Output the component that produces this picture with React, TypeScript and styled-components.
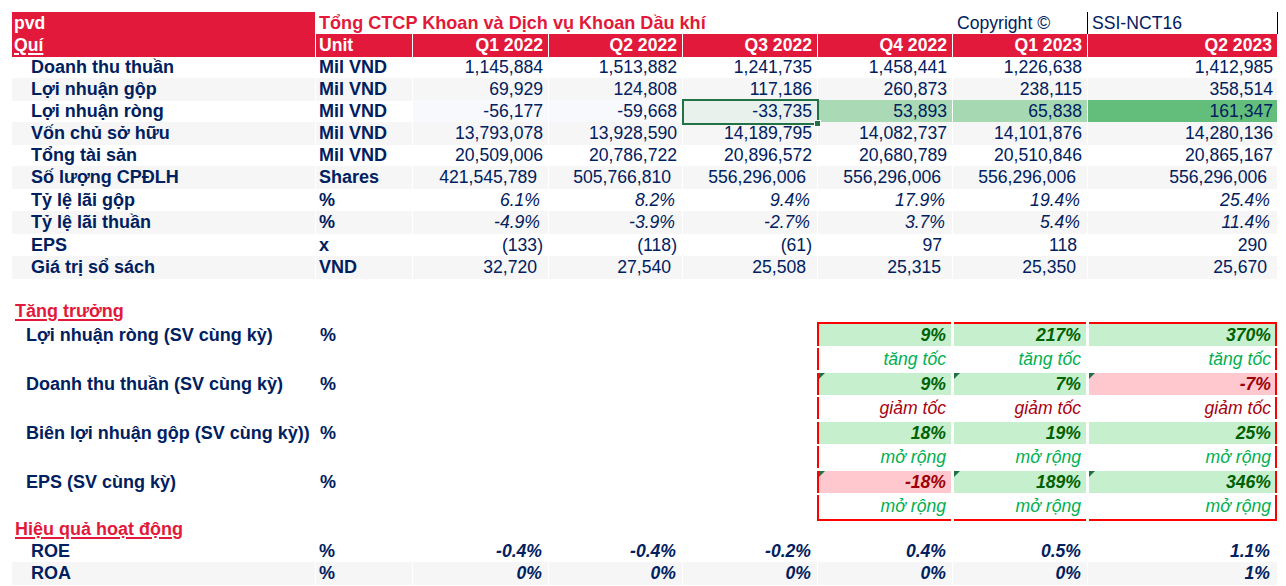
import React from 'react';
import styled, { createGlobalStyle, css } from 'styled-components';

const GlobalStyle = createGlobalStyle`
  html, body {
    margin: 0;
    padding: 0;
    background: #ffffff;
  }
  body {
    font-family: 'Liberation Sans', Arial, sans-serif;
    font-size: 17.6px;
    color: #002060;
    overflow: hidden;
  }
`;

const COLS = '304px 97px 136px 134px 135px 135px 135px 190px';
const RED = '#e2193a';
const NAVY = '#002060';
const SHADE = '#f6f6f6';

const Sheet = styled.div`
  box-sizing: border-box;
  height: 586px;
  padding: 12px 0 0 12px;
  overflow: hidden;
`;

const Row = styled.div<{ $h?: number }>`
  display: grid;
  grid-template-columns: ${COLS};
  height: ${(p) => p.$h ?? 22}px;
  line-height: ${(p) => (p.$h ?? 22) + 1}px;
`;

type CellProps = {
  $bg?: string;
  $right?: boolean;
  $pad?: number;
  $bold?: boolean;
  $italic?: boolean;
  $color?: string;
};

const Cell = styled.div<CellProps>`
  box-sizing: border-box;
  position: relative;
  border-right: 1px solid #ffffff;
  border-bottom: 1px solid #ffffff;
  background: ${(p) => p.$bg ?? 'transparent'};
  color: ${(p) => p.$color ?? NAVY};
  font-weight: ${(p) => (p.$bold ? 700 : 400)};
  font-size: ${(p) => (p.$bold && !p.$italic ? 18 : 17.6)}px;
  font-style: ${(p) => (p.$italic ? 'italic' : 'normal')};
  text-align: ${(p) => (p.$right ? 'right' : 'left')};
  white-space: nowrap;
  ${(p) =>
    p.$right
      ? css`
          padding-right: ${p.$pad ?? 5}px;
        `
      : css`
          padding-left: ${p.$pad ?? 3}px;
        `}
`;

const TitleText = styled(Cell)`
  grid-column: 2 / 7;
  overflow: visible;
  font-size: 18.1px;
`;

const CodeCell = styled(Cell)`
  border-left: 1px solid #000000;
  border-right: 1px solid #000000;
  margin-left: -1px;
`;

const HeadCell = styled(Cell)`
  background: ${RED};
  color: #ffffff;
  font-weight: 700;
`;

const Underlined = styled.span`
  text-decoration: underline;
  text-decoration-thickness: 1.5px;
  text-underline-offset: 2px;
`;

const SelectedCell = styled(Cell)`
  background: #e9f1ec;
  outline: 2px solid #217346;
  outline-offset: -1px;
  z-index: 1;

  &::after {
    content: '';
    position: absolute;
    right: -4px;
    bottom: -4px;
    width: 5px;
    height: 5px;
    background: #217346;
    border: 1px solid #ffffff;
  }
`;

const SectionTitle = styled.div`
  grid-column: 1 / 4;
  padding-left: 3px;
  color: ${RED};
  font-weight: 700;
  font-size: 18px;
  white-space: nowrap;
  text-decoration: underline;
  text-decoration-thickness: 2px;
  text-underline-offset: 2px;
`;

const GrowthLabel = styled.div<{ $offset?: number }>`
  padding: ${(p) => p.$offset ?? 0}px 0 0 14px;
  line-height: 23.5px;
  font-weight: 700;
  font-size: 18px;
  white-space: nowrap;
`;

const GrowthUnit = styled.div<{ $offset?: number }>`
  padding: ${(p) => p.$offset ?? 0}px 0 0 4px;
  line-height: 23.5px;
  font-weight: 700;
  font-size: 18px;
  grid-column: 2 / 6;
`;

const GrowthGap = styled.div`
  grid-column: 1 / 6;
`;

type Tone = 'good' | 'bad' | 'up' | 'down';
type Slot = 'first' | 'mid' | 'last';

const toneStyle: Record<Tone, { bg: string; color: string; bold: boolean }> = {
  good: { bg: '#c6efce', color: '#006100', bold: true },
  bad: { bg: '#ffc7ce', color: '#9c0006', bold: true },
  up: { bg: '#ffffff', color: '#00b050', bold: false },
  down: { bg: '#ffffff', color: '#a8000f', bold: false },
};

const slotMargin: Record<Slot, string> = {
  first: '0 2px 0 -1px',
  mid: '0 2px 0 1px',
  last: '0 1px 0 1px',
};

const GrowthCell = styled.div<{
  $tone: Tone;
  $slot: Slot;
  $top?: boolean;
  $bottom?: boolean;
  $flag?: boolean;
}>`
  position: relative;
  box-sizing: border-box;
  height: ${(p) => (p.$bottom ? '100%' : 'calc(100% - 2.5px)')};
  margin: ${(p) => slotMargin[p.$slot]};
  padding-right: ${(p) => (p.$slot === 'last' ? 4 : 5)}px;
  background: ${(p) => toneStyle[p.$tone].bg};
  color: ${(p) => toneStyle[p.$tone].color};
  font-weight: ${(p) => (toneStyle[p.$tone].bold ? 700 : 400)};
  font-style: italic;
  text-align: right;
  line-height: 23.5px;
  white-space: nowrap;
  border-left: ${(p) => (p.$slot === 'first' ? '2px solid #ff0000' : 'none')};
  border-right: ${(p) => (p.$slot === 'last' ? '2px solid #ff0000' : 'none')};
  border-top: ${(p) => (p.$top ? '2px solid #ff0000' : 'none')};
  border-bottom: ${(p) => (p.$bottom ? '2px solid #ff0000' : 'none')};

  ${(p) =>
    p.$flag &&
    css`
      &::before {
        content: '';
        position: absolute;
        top: 0;
        left: 0;
        border-top: 6px solid #1e7145;
        border-right: 6px solid transparent;
      }
    `}
`;

type DataRow = {
  label: string;
  unit: string;
  values: string[];
  shade?: boolean;
  italic?: boolean;
  pad?: number[];
  fills?: (string | undefined)[];
  selected?: number;
  h?: number;
};

const quarters = ['Q1 2022', 'Q2 2022', 'Q3 2022', 'Q4 2022', 'Q1 2023', 'Q2 2023'];

const wide = [11, 11, 11, 11, 11, 10];
const pct = [8, 7, 7, 7, 7, 7];

const dataRows: DataRow[] = [
  {
    label: 'Doanh thu thuần',
    unit: 'Mil VND',
    values: ['1,145,884', '1,513,882', '1,241,735', '1,458,441', '1,226,638', '1,412,985'],
  },
  {
    label: 'Lợi nhuận gộp',
    unit: 'Mil VND',
    values: ['69,929', '124,808', '117,186', '260,873', '238,115', '358,514'],
    shade: true,
  },
  {
    label: 'Lợi nhuận ròng',
    unit: 'Mil VND',
    values: ['-56,177', '-59,668', '-33,735', '53,893', '65,838', '161,347'],
    fills: ['#f8f9fc', '#f8f9fc', undefined, '#a9dab5', '#a6d9b2', '#63be7b'],
    selected: 2,
  },
  {
    label: 'Vốn chủ sở hữu',
    unit: 'Mil VND',
    values: ['13,793,078', '13,928,590', '14,189,795', '14,082,737', '14,101,876', '14,280,136'],
    shade: true,
  },
  {
    label: 'Tổng tài sản',
    unit: 'Mil VND',
    values: ['20,509,006', '20,786,722', '20,896,572', '20,680,789', '20,510,846', '20,865,167'],
  },
  {
    label: 'Số lượng CPĐLH',
    unit: 'Shares',
    values: ['421,545,789', '505,766,810', '556,296,006', '556,296,006', '556,296,006', '556,296,006'],
    shade: true,
    pad: wide,
  },
  {
    label: 'Tỷ lệ lãi gộp',
    unit: '%',
    values: ['6.1%', '8.2%', '9.4%', '17.9%', '19.4%', '25.4%'],
    italic: true,
    pad: pct,
    h: 23,
  },
  {
    label: 'Tỷ lệ lãi thuần',
    unit: '%',
    values: ['-4.9%', '-3.9%', '-2.7%', '3.7%', '5.4%', '11.4%'],
    italic: true,
    shade: true,
    pad: pct,
  },
  {
    label: 'EPS',
    unit: 'x',
    values: ['(133)', '(118)', '(61)', '97', '118', '290'],
    pad: [5, 5, 5, 10, 10, 10],
    h: 23,
  },
  {
    label: 'Giá trị sổ sách',
    unit: 'VND',
    values: ['32,720', '27,540', '25,508', '25,315', '25,350', '25,670'],
    shade: true,
    pad: wide,
  },
];

type GrowthItem = {
  label: string;
  values: { text: string; tone: Tone; flag?: boolean }[];
  note: string;
  noteTone: Tone;
};

const growth: GrowthItem[] = [
  {
    label: 'Lợi nhuận ròng (SV cùng kỳ)',
    values: [
      { text: '9%', tone: 'good' },
      { text: '217%', tone: 'good' },
      { text: '370%', tone: 'good' },
    ],
    note: 'tăng tốc',
    noteTone: 'up',
  },
  {
    label: 'Doanh thu thuần (SV cùng kỳ)',
    values: [
      { text: '9%', tone: 'good', flag: true },
      { text: '7%', tone: 'good', flag: true },
      { text: '-7%', tone: 'bad', flag: true },
    ],
    note: 'giảm tốc',
    noteTone: 'down',
  },
  {
    label: 'Biên lợi nhuận gộp (SV cùng kỳ))',
    values: [
      { text: '18%', tone: 'good' },
      { text: '19%', tone: 'good' },
      { text: '25%', tone: 'good' },
    ],
    note: 'mở rộng',
    noteTone: 'up',
  },
  {
    label: 'EPS (SV cùng kỳ)',
    values: [
      { text: '-18%', tone: 'bad', flag: true },
      { text: '189%', tone: 'good', flag: true },
      { text: '346%', tone: 'good', flag: true },
    ],
    note: 'mở rộng',
    noteTone: 'up',
  },
];

const efficiency = [
  { label: 'ROE', values: ['-0.4%', '-0.4%', '-0.2%', '0.4%', '0.5%', '1.1%'] },
  { label: 'ROA', values: ['0%', '0%', '0%', '0%', '0%', '1%'], shade: true },
];

const slots: Slot[] = ['first', 'mid', 'last'];

const App = (): JSX.Element => {
  return (
    <Sheet>
      <GlobalStyle />

      <Row>
        <HeadCell $pad={2}>pvd</HeadCell>
        <TitleText $bold $color={RED} $pad={3}>
          Tổng CTCP Khoan và Dịch vụ Khoan Dầu khí
        </TitleText>
        <Cell $pad={4}>Copyright ©</Cell>
        <CodeCell $pad={4}>SSI-NCT16</CodeCell>
      </Row>

      <Row>
        <HeadCell $pad={2}>
          <Underlined>Quí</Underlined>
        </HeadCell>
        <HeadCell $pad={3}>Unit</HeadCell>
        {quarters.map((q) => (
          <HeadCell key={q} $right>
            {q}
          </HeadCell>
        ))}
      </Row>

      {dataRows.map((row) => {
        const bg = row.shade ? SHADE : undefined;
        return (
          <Row key={row.label} $h={row.h}>
            <Cell $bg={bg} $bold $pad={19}>
              {row.label}
            </Cell>
            <Cell $bg={bg} $bold $pad={3}>
              {row.unit}
            </Cell>
            {row.values.map((v, i) => {
              const fill = row.fills?.[i] ?? bg;
              const pad = row.pad?.[i] ?? (i === 5 ? 4 : 5);
              if (row.selected === i) {
                return (
                  <SelectedCell key={i} $right $pad={pad}>
                    {v}
                  </SelectedCell>
                );
              }
              return (
                <Cell key={i} $bg={fill} $right $pad={pad} $italic={row.italic}>
                  {v}
                </Cell>
              );
            })}
          </Row>
        );
      })}

      <Row />

      <Row>
        <SectionTitle>Tăng trưởng</SectionTitle>
      </Row>

      {growth.map((g, gi) => {
        const first = gi === 0;
        const last = gi === growth.length - 1;
        return (
          <React.Fragment key={g.label}>
            <Row $h={first ? 26 : 24.5}>
              <GrowthLabel $offset={first ? 2 : 0}>{g.label}</GrowthLabel>
              <GrowthUnit $offset={first ? 2 : 0}>%</GrowthUnit>
              {g.values.map((v, i) => (
                <GrowthCell key={i} $tone={v.tone} $slot={slots[i]} $top={first} $flag={v.flag}>
                  {v.text}
                </GrowthCell>
              ))}
            </Row>
            <Row $h={last ? 23 : 24.5}>
              <GrowthGap />
              {slots.map((s) => (
                <GrowthCell key={s} $tone={g.noteTone} $slot={s} $bottom={last}>
                  {g.note}
                </GrowthCell>
              ))}
            </Row>
          </React.Fragment>
        );
      })}

      <Row>
        <SectionTitle>Hiệu quả hoạt động</SectionTitle>
      </Row>

      {efficiency.map((row) => {
        const bg = row.shade ? SHADE : undefined;
        return (
          <Row key={row.label}>
            <Cell $bg={bg} $bold $pad={19}>
              {row.label}
            </Cell>
            <Cell $bg={bg} $bold $pad={3}>
              %
            </Cell>
            {row.values.map((v, i) => (
              <Cell key={i} $bg={bg} $right $pad={i === 5 ? 7 : 6} $bold $italic>
                {v}
              </Cell>
            ))}
          </Row>
        );
      })}

      <Row>
        <SectionTitle>Định giá cổ phiếu</SectionTitle>
      </Row>
    </Sheet>
  );
};

export default App;
